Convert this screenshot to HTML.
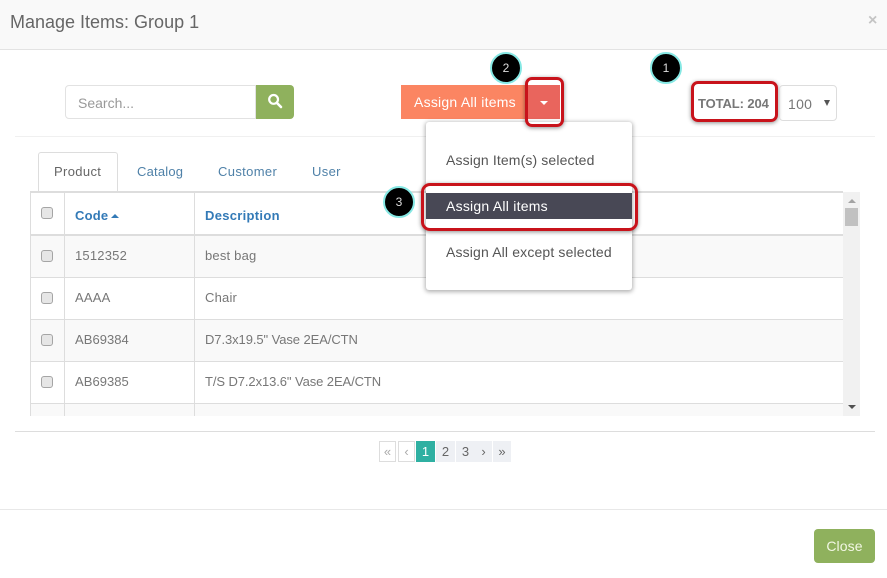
<!DOCTYPE html>
<html><head><meta charset="utf-8">
<style>
html,body{margin:0;padding:0;background:#fff}
body{width:887px;height:578px;position:relative;overflow:hidden;font-family:"Liberation Sans",sans-serif;color:#777;font-size:13px}
.a{position:absolute;white-space:nowrap}
.l{position:absolute;background:#ddd}
.cb{position:absolute;left:41px;width:10px;height:10px;border:1px solid #a5a5a5;border-radius:3px;background:#e6e6e6}
.t{position:absolute;white-space:nowrap;line-height:18px;letter-spacing:.2px;font-size:13px}
.pg{position:absolute;top:441px;height:21px;line-height:21px;text-align:center;background:#eef0f4;color:#666;font-size:13px}
.rb{position:absolute;border:3px solid #c8131b;border-radius:7px;box-shadow:0 1px 4px rgba(0,0,0,.45);box-sizing:border-box}
.n{position:absolute;width:28px;height:28px;line-height:28px;border-radius:50%;background:#000;border:2px solid #86e8e4;color:#ddd;text-align:center;font-size:12px}
</style></head><body>
<div class="a" style="left:0;top:0;width:887px;height:49px;background:#f9f9f9;border-bottom:1px solid #e3e3e3"></div>
<div class="a" style="left:10px;top:10px;font-size:18px;line-height:24px;color:#666;letter-spacing:0">Manage Items: Group 1</div>
<div class="a" style="left:868px;top:11px;font-size:16px;line-height:20px;color:#c4c4c4;font-weight:bold">×</div>

<div class="a" style="left:65px;top:85px;width:191px;height:34px;box-sizing:border-box;border:1px solid #e2e2e2;border-radius:4px 0 0 4px"></div>
<div class="a" style="left:78px;top:94px;font-size:14px;line-height:18px;color:#999;letter-spacing:0">Search...</div>
<div class="a" style="left:256px;top:85px;width:38px;height:34px;background:#8fb15d;border-radius:0 4px 4px 0"></div>
<svg class="a" style="left:267px;top:93px" width="16" height="16" viewBox="0 0 16 16"><circle cx="6.6" cy="6.4" r="4.4" fill="none" stroke="#fff" stroke-width="2.2"/><path d="M10 10l4 4" stroke="#fff" stroke-width="2.6" stroke-linecap="round"/></svg>

<div class="a" style="left:401px;top:85px;width:126px;height:34px;background:#fb8562"></div>
<div class="a" style="left:414px;top:93px;font-size:14px;line-height:18px;color:#fff;letter-spacing:.24px">Assign All items</div>
<div class="a" style="left:527px;top:85px;width:33px;height:34px;background:#e9655d"></div>
<div class="a" style="left:540px;top:101px;width:0;height:0;border:4px solid transparent;border-top-color:#fff;border-bottom:0"></div>

<div class="a" style="left:698px;top:96px;font-size:13px;line-height:15px;font-weight:bold;color:#777;letter-spacing:-.1px">TOTAL: 204</div>
<div class="rb" style="left:691px;top:81px;width:87px;height:41px"></div>
<div class="a" style="left:779px;top:85px;width:58px;height:36px;box-sizing:border-box;border:1px solid #ddd;border-radius:4px"></div>
<div class="a" style="left:788px;top:95px;font-size:14px;line-height:18px;color:#777;letter-spacing:.3px">100</div>
<div class="a" style="left:824px;top:100px;width:0;height:0;border:3.5px solid transparent;border-top:6px solid #555;border-bottom:0"></div>

<div class="l" style="left:15px;top:136px;width:860px;height:1px;background:#f0f0f0"></div>

<div class="a" style="left:38px;top:152px;width:80px;height:40px;box-sizing:border-box;border:1px solid #ddd;border-bottom:0;border-radius:3px 3px 0 0;background:#fff"></div>
<div class="t" style="left:54px;top:163px;color:#666;letter-spacing:.35px">Product</div>
<div class="t" style="left:137px;top:163px;color:#4f81a8;letter-spacing:.2px">Catalog</div>
<div class="t" style="left:218px;top:163px;color:#4f81a8;letter-spacing:.35px">Customer</div>
<div class="t" style="left:312px;top:163px;color:#4f81a8;letter-spacing:.35px">User</div>

<div class="a" style="left:31px;top:235px;width:812px;height:42px;background:#f9f9f9"></div>
<div class="a" style="left:31px;top:319px;width:812px;height:42px;background:#f9f9f9"></div>
<div class="a" style="left:31px;top:403px;width:812px;height:13px;background:#f9f9f9"></div>
<div class="l" style="left:30px;top:191px;width:813px;height:2px"></div>
<div class="l" style="left:30px;top:234px;width:813px;height:2px"></div>
<div class="l" style="left:30px;top:277px;width:813px;height:1px"></div>
<div class="l" style="left:30px;top:319px;width:813px;height:1px"></div>
<div class="l" style="left:30px;top:361px;width:813px;height:1px"></div>
<div class="l" style="left:30px;top:403px;width:813px;height:1px"></div>
<div class="l" style="left:30px;top:192px;width:1px;height:224px"></div>
<div class="l" style="left:64px;top:192px;width:1px;height:224px"></div>
<div class="l" style="left:194px;top:192px;width:1px;height:224px"></div>

<div class="a" style="left:843px;top:192px;width:17px;height:224px;background:#f1f1f1"></div>
<div class="a" style="left:845px;top:208px;width:13px;height:18px;background:#c1c1c1"></div>
<div class="a" style="left:848px;top:199px;width:0;height:0;border:4px solid transparent;border-bottom-color:#a3a3a3;border-top:0"></div>
<div class="a" style="left:848px;top:405px;width:0;height:0;border:4px solid transparent;border-top-color:#505050;border-bottom:0"></div>

<div class="cb" style="top:207px"></div>
<div class="cb" style="top:250px"></div>
<div class="cb" style="top:292px"></div>
<div class="cb" style="top:334px"></div>
<div class="cb" style="top:376px"></div>

<div class="t" style="left:75px;top:207px;font-weight:bold;color:#337ab7;letter-spacing:.2px">Code</div>
<div class="a" style="left:111px;top:214px;width:0;height:0;border:4px solid transparent;border-bottom-color:#337ab7;border-top:0"></div>
<div class="t" style="left:205px;top:207px;font-weight:bold;color:#337ab7;letter-spacing:.3px">Description</div>

<div class="t" style="left:75px;top:247px;letter-spacing:.2px">1512352</div><div class="t" style="left:205px;top:247px;letter-spacing:.2px">best bag</div>
<div class="t" style="left:75px;top:289px;letter-spacing:.2px">AAAA</div><div class="t" style="left:205px;top:289px;letter-spacing:.2px">Chair</div>
<div class="t" style="left:75px;top:331px;letter-spacing:.05px">AB69384</div><div class="t" style="left:205px;top:331px;letter-spacing:-.08px">D7.3x19.5" Vase 2EA/CTN</div>
<div class="t" style="left:75px;top:373px;letter-spacing:.05px">AB69385</div><div class="t" style="left:205px;top:373px;letter-spacing:-.09px">T/S D7.2x13.6" Vase 2EA/CTN</div>

<div class="a" style="left:426px;top:122px;width:206px;height:168px;background:#fff;border-radius:3px;box-shadow:0 1px 4px 1px rgba(0,0,0,.3)"></div>
<div class="a" style="left:446px;top:151px;font-size:14px;line-height:18px;color:#555;letter-spacing:.13px">Assign Item(s) selected</div>
<div class="a" style="left:426px;top:193px;width:206px;height:26px;background:#484855"></div>
<div class="a" style="left:446px;top:197px;font-size:14px;line-height:18px;color:#fff;letter-spacing:.24px">Assign All items</div>
<div class="a" style="left:446px;top:243px;font-size:14px;line-height:18px;color:#555;letter-spacing:.15px">Assign All except selected</div>
<div class="rb" style="left:421px;top:183px;width:217px;height:48px;border-radius:9px"></div>
<div class="rb" style="left:525px;top:77px;width:39px;height:50px"></div>

<div class="n" style="left:490px;top:52px">2</div>
<div class="n" style="left:650px;top:52px">1</div>
<div class="n" style="left:383px;top:186px">3</div>

<div class="l" style="left:15px;top:431px;width:860px;height:1px"></div>

<div class="pg" style="left:379px;width:17px;box-sizing:border-box;background:#fff;border:1px solid #ddd;line-height:19px;color:#aaa">«</div>
<div class="pg" style="left:398px;width:17px;box-sizing:border-box;background:#fff;border:1px solid #ddd;line-height:19px;color:#aaa">‹</div>
<div class="pg" style="left:416px;width:19px;background:#2fb0a2;color:#fff">1</div>
<div class="pg" style="left:436px;width:19px">2</div>
<div class="pg" style="left:456px;width:19px">3</div>
<div class="pg" style="left:475px;width:17px">›</div>
<div class="pg" style="left:493px;width:18px">»</div>

<div class="l" style="left:0;top:509px;width:887px;height:1px;background:#e8e8e8"></div>
<div class="a" style="left:814px;top:529px;width:61px;height:34px;line-height:34px;text-align:center;background:#8fb15d;border-radius:4px;color:#f2f7e4;font-size:14px;letter-spacing:.1px">Close</div>
</body></html>
